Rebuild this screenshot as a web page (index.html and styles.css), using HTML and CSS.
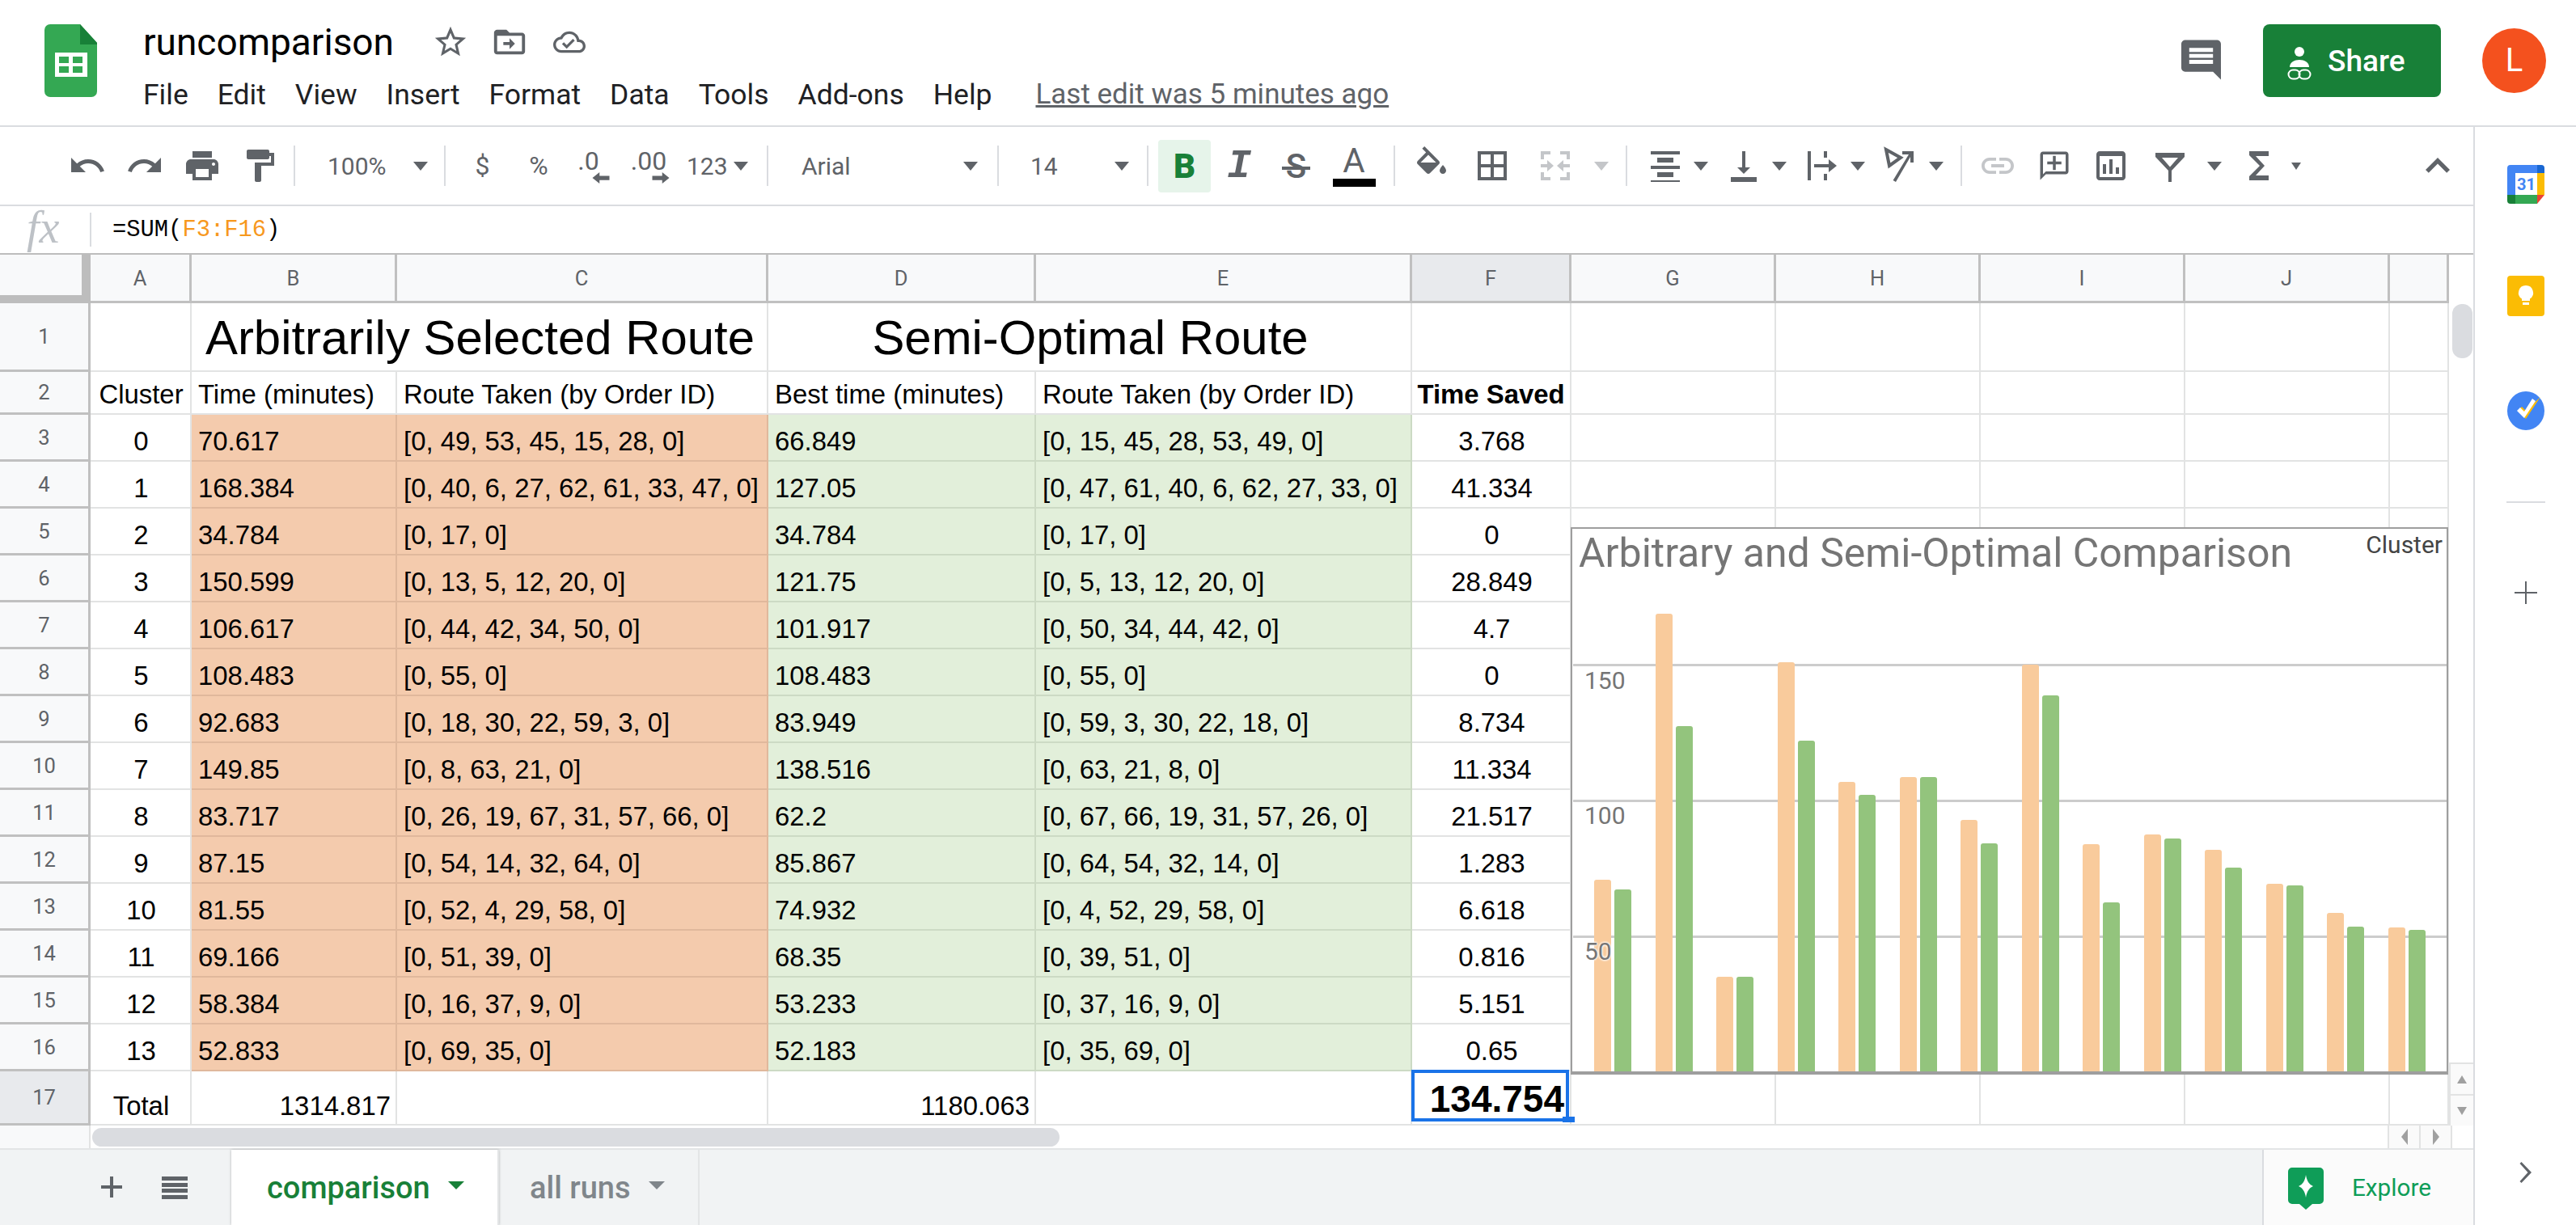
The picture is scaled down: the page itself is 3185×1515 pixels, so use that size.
FILE: index.html
```html
<!DOCTYPE html>
<html lang="en">
<head>
  <meta charset="utf-8" />
  <title>runcomparison - Google Sheets</title>
  <link rel="stylesheet" href="styles.css">
</head>
<body>

  <header class="titlebar">
    <svg class="logo" viewBox="0 0 65 90">
      <path fill="#34a853" d="M7 0h37l21 23v60a7 7 0 0 1-7 7H7a7 7 0 0 1-7-7V7a7 7 0 0 1 7-7z"/>
      <path fill="#188038" d="M44 0l21 23v2H44z"/>
      <path fill="#fff" d="M13 35h40v30H13z"/>
      <path fill="#34a853" d="M18 40h12v8H18zM35 40h12v8H35zM18 52h12v8H18zM35 52h12v8H35z"/>
    </svg>
    <div class="doc-info">
      <div class="doc-title">
        <span class="doc-name">runcomparison</span>
        <svg class="doc-icon wide" viewBox="0 0 24 24"><path d="M22 9.24l-7.19-.62L12 2 9.19 8.63 2 9.24l5.46 4.73L5.82 21 12 17.27 18.18 21l-1.63-7.03L22 9.24zM12 15.4l-3.76 2.27 1-4.28-3.32-2.88 4.38-.38L12 6.1l1.71 4.04 4.38.38-3.32 2.88 1 4.28L12 15.4z"/></svg>
        <svg class="doc-icon wide" viewBox="0 0 24 24"><path d="M20 6h-8l-2-2H4c-1.1 0-2 .9-2 2v12c0 1.1.9 2 2 2h16c1.100 0 2-.9 2-2V8c0-1.100-.9-2-2-2zm0 12H4V8h16v10z"/><path d="M12 9.500l3.500 3.500-3.500 3.500V14H8v-2h4z"/></svg>
        <svg class="doc-icon cloud" viewBox="0 0 24 24"><path d="M19.350 10.040C18.670 6.590 15.640 4 12 4 9.110 4 6.600 5.640 5.350 8.040 2.340 8.360 0 10.910 0 14c0 3.310 2.690 6 6 6h13c2.760 0 5-2.240 5-5 0-2.640-2.050-4.780-4.650-4.960zM19 18H6c-2.210 0-4-1.790-4-4 0-2.050 1.530-3.760 3.560-3.970l1.070-.11.5-.95C8.080 7.140 9.940 6 12 6c2.620 0 4.880 1.860 5.390 4.430l.3 1.500 1.530.11c1.560.1 2.780 1.410 2.780 2.960 0 1.650-1.350 3-3 3zM10 14.200l-2.090-2.090L6.500 13.500 10 17l6.010-6.010-1.410-1.410z"/></svg>
      </div>
      <nav class="menu">
        <span>File</span><span>Edit</span><span>View</span><span>Insert</span><span>Format</span><span>Data</span><span>Tools</span><span>Add-ons</span><span>Help</span>
        <a class="last-edit">Last edit was 5 minutes ago</a>
      </nav>
    </div>
    <div class="title-actions">
      <svg class="comments" viewBox="2 2 20 20"><path d="M21.990 4c0-1.100-.89-2-1.990-2H4c-1.100 0-2 .9-2 2v12c0 1.100.9 2 2 2h14l4 4-.01-18zM18 14H6v-2h12v2zm0-3H6V9h12v2zm0-3H6V6h12v2z"/></svg>
      <button class="share">
        <svg viewBox="0 0 30 42"><circle cx="15" cy="6" r="6"/><path d="M3 25c0-6 6-9 12-9s12 3 12 9z"/><rect x="1.500" y="28.500" width="14" height="11" rx="5.500" fill="none" stroke="#fff" stroke-width="2"/><rect x="14.500" y="28.500" width="14" height="11" rx="5.500" fill="none" stroke="#fff" stroke-width="2"/></svg>
        Share
      </button>
      <div class="avatar">L</div>
    </div>
  </header>

  <div class="workspace">
    <div class="editor">

      <div class="toolbar">
        <div class="tb w71"><svg viewBox="0 0 24 24"><path d="M12.500 8c-2.650 0-5.050.99-6.900 2.600L2 7v9h9l-3.620-3.620c1.390-1.160 3.160-1.880 5.120-1.880 3.540 0 6.550 2.310 7.600 5.500l2.370-.78C21.080 11.030 17.150 8 12.500 8z"/></svg></div>
        <div class="tb w71"><svg viewBox="0 0 24 24"><path d="M18.400 10.600C16.550 8.990 14.150 8 11.500 8c-4.650 0-8.580 3.030-9.960 7.220L3.900 16c1.050-3.190 4.050-5.500 7.600-5.500 1.950 0 3.730.72 5.120 1.880L13 16h9V7l-3.600 3.600z"/></svg></div>
        <div class="tb w71"><svg viewBox="0 0 24 24"><path d="M19 8H5c-1.660 0-3 1.340-3 3v6h4v4h12v-4h4v-6c0-1.660-1.340-3-3-3zm-3 11H8v-5h8v5zm3-7c-.55 0-1-.45-1-1s.45-1 1-1 1 .45 1 1-.45 1-1 1zm-1-9H6v4h12V3z"/></svg></div>
        <div class="tb w71"><svg viewBox="0 0 24 24"><path d="M18 4V3c0-.55-.45-1-1-1H5c-.55 0-1 .45-1 1v4c0 .55.45 1 1 1h12c.55 0 1-.45 1-1V6h1v4H9v11c0 .55.45 1 1 1h2c.55 0 1-.45 1-1v-9h8V4h-3z"/></svg></div>
        <div class="sep sep-7"></div>

        <div class="select zoom-select"><span>100%</span><i class="caret"></i></div>
        <div class="sep"></div>

        <div class="tb txt w71 dollar">$</div>
        <div class="tb txt w68">%</div>
        <div class="tb txt dec w55"><span>.0</span><svg class="dec-arrow" viewBox="0 0 24 16"><path d="M10 0v5h14v6H10v5L0 8z"/></svg></div>
        <div class="tb txt dec w94"><span>.00</span><svg class="dec-arrow" viewBox="0 0 24 16"><path d="M14 0v5H0v6h14v5l10-8z"/></svg></div>
        <div class="num-format"><span>123</span><i class="caret"></i></div>
        <div class="sep"></div>

        <div class="select font-select"><span>Arial</span><i class="caret"></i></div>
        <div class="sep"></div>
        <div class="select size-select"><span>14</span><i class="caret"></i></div>
        <div class="sep"></div>

        <div class="tb bold-btn">B</div>
        <div class="tb w70 italic-btn">I</div>
        <div class="tb w71 strike-btn"><span>S</span></div>
        <div class="tb w72 color-btn"><span>A</span><i class="color-bar"></i></div>
        <div class="sep sep-13"></div>

        <div class="tb w90"><svg viewBox="0 0 24 24"><path d="M16.560 8.940L7.620 0 6.210 1.410l2.380 2.380-5.150 5.150c-.59.59-.59 1.540 0 2.120l5.500 5.500c.29.29.68.44 1.060.44s.77-.15 1.060-.44l5.500-5.500c.59-.58.59-1.530 0-2.120zM5.210 10L10 5.210 14.790 10H5.210zM19 11.500s-2 2.170-2 3.500c0 1.100.9 2 2 2s2-.9 2-2c0-1.330-2-3.500-2-3.500z"/></svg></div>
        <div class="tb w60"><svg viewBox="0 0 24 24"><path d="M3 3v18h18V3H3zm8 16H5v-6h6v6zm0-8H5V5h6v6zm8 8h-6v-6h6v6zm0-8h-6V5h6v6z"/></svg></div>
        <div class="tb w96 off"><svg viewBox="0 0 24 24"><path d="M3 3h6v2H5v3H3zM15 3h6v5h-2V5h-4zM3 16h2v3h4v2H3zM19 16h2v5h-6v-2h4zM3 11h4V8.500L11 12l-4 3.500V13H3zM21 11h-4V8.500L13 12l4 3.500V13h4z"/></svg></div>
        <i class="caret off"></i>
        <div class="sep sep-21"></div>

        <div class="tb w70 ml12"><svg viewBox="0 0 24 24"><path d="M3 3h18v2H3zM7 7h10v3H7zM3 12h18v2H3zM7 16h10v3H7zM3 21h18v1H3z"/></svg></div>
        <i class="caret"></i>
        <div class="tb w70 ml9"><svg viewBox="0 0 24 24"><path d="M16 13h-3V3h-2v10H8l4 4 4-4zM4 19v3h16v-3H4z"/></svg></div>
        <i class="caret"></i>
        <div class="tb w70 ml9"><svg viewBox="0 0 24 24"><path d="M3 3h2v18H3zM13 3h2v4h-2zM13 17h2v4h-2zM7 11h9V8l5 4-5 4v-3H7z"/></svg></div>
        <i class="caret"></i>
        <div class="tb w70 ml9"><svg viewBox="0 0 24 24"><path d="M3 2l9 5-7 5z" fill="none" stroke="#5f6368" stroke-width="2"/><path d="M9 22l-1.700-1L17 5h-4V3h7v7h-2V6.500z"/></svg></div>
        <i class="caret"></i>
        <div class="sep sep-21"></div>

        <div class="tb w70 ml9 off"><svg viewBox="0 0 24 24"><path d="M3.900 12c0-1.710 1.390-3.100 3.100-3.100h4V7H7c-2.760 0-5 2.240-5 5s2.240 5 5 5h4v-1.900H7c-1.710 0-3.100-1.390-3.100-3.100zM8 13h8v-2H8v2zm9-6h-4v1.900h4c1.710 0 3.100 1.390 3.100 3.100s-1.390 3.100-3.100 3.100h-4V17h4c2.760 0 5-2.240 5-5s-2.240-5-5-5z"/></svg></div>
        <div class="tb w70"><svg class="small" viewBox="0 0 24 24"><path d="M20 2H4c-1.100 0-2 .9-2 2v18l4-4h14c1.100 0 2-.9 2-2V4c0-1.100-.9-2-2-2zm0 14H6l-2 2V4h16v12zM13 5h-2v4H7v2h4v4h2v-4h4V9h-4z"/></svg></div>
        <div class="tb w70"><svg viewBox="0 0 24 24"><path d="M19 3H5c-1.100 0-2 .9-2 2v14c0 1.100.9 2 2 2h14c1.100 0 2-.9 2-2V5c0-1.100-.9-2-2-2zm0 16H5V6h14v13z"/><path d="M7 11h2v6H7zM11 8h2v9h-2zM15 13h2v4h-2z"/></svg></div>
        <div class="tb w70 ml3"><svg viewBox="0 0 24 24"><path fill-rule="evenodd" d="M3 4h18v2.500L13 15v7h-2v-7L3 6.500zM7 7l5 5.800L17 7z"/></svg></div>
        <i class="caret ml11"></i>
        <div class="tb w80 ml6"><svg viewBox="0 0 24 24"><path d="M18 3H6v2.500L12.500 12 6 18.500V21h12v-3h-8l5.500-6L10 6h8z"/></svg></div>
        <i class="caret mini"></i>
        <div class="tb collapse"><svg viewBox="0 0 24 24"><path d="M12 7l-7.500 7.500 1.900 1.900L12 10.800l5.600 5.600 1.900-1.900z"/></svg></div>
      </div>

      <div class="formula-bar">
        <span class="fx">fx</span>
        <span class="fx-text">=SUM(<span class="ref">F3:F16</span>)</span>
      </div>

      <div class="grid-wrap">
        <div class="grid-scroll">
          <table class="sheet">
            <colgroup>
              <col class="c-rh"><col class="c-a"><col class="c-b"><col class="c-c"><col class="c-d"><col class="c-e"><col class="c-f"><col class="c-n"><col class="c-n"><col class="c-n"><col class="c-n"><col class="c-k">
            </colgroup>
            <tr class="r-head">
              <th class="corner"></th><th>A</th><th>B</th><th>C</th><th>D</th><th>E</th><th class="on">F</th><th>G</th><th>H</th><th>I</th><th>J</th><th></th>
            </tr>
            <tr class="r-1">
              <th class="rh">1</th><td></td><td class="big" colspan="2">Arbitrarily Selected Route</td><td class="big" colspan="2">Semi-Optimal Route</td><td></td><td></td><td></td><td></td><td></td><td></td>
            </tr>
            <tr class="r-2">
              <th class="rh">2</th><td class="c">Cluster</td><td>Time (minutes)</td><td>Route Taken (by Order ID)</td><td>Best time (minutes)</td><td>Route Taken (by Order ID)</td><td class="c b">Time Saved</td><td></td><td></td><td></td><td></td><td></td>
            </tr>
            <tr class="r-58">
              <th class="rh">3</th><td class="c">0</td><td class="o">70.617</td><td class="o">[0, 49, 53, 45, 15, 28, 0]</td><td class="g">66.849</td><td class="g">[0, 15, 45, 28, 53, 49, 0]</td><td class="c">3.768</td><td></td><td></td><td></td><td></td><td></td>
            </tr>
            <tr class="r-58">
              <th class="rh">4</th><td class="c">1</td><td class="o">168.384</td><td class="o">[0, 40, 6, 27, 62, 61, 33, 47, 0]</td><td class="g">127.05</td><td class="g">[0, 47, 61, 40, 6, 62, 27, 33, 0]</td><td class="c">41.334</td><td></td><td></td><td></td><td></td><td></td>
            </tr>
            <tr class="r-58">
              <th class="rh">5</th><td class="c">2</td><td class="o">34.784</td><td class="o">[0, 17, 0]</td><td class="g">34.784</td><td class="g">[0, 17, 0]</td><td class="c">0</td><td></td><td></td><td></td><td></td><td></td>
            </tr>
            <tr class="r-58">
              <th class="rh">6</th><td class="c">3</td><td class="o">150.599</td><td class="o">[0, 13, 5, 12, 20, 0]</td><td class="g">121.75</td><td class="g">[0, 5, 13, 12, 20, 0]</td><td class="c">28.849</td><td></td><td></td><td></td><td></td><td></td>
            </tr>
            <tr class="r-58">
              <th class="rh">7</th><td class="c">4</td><td class="o">106.617</td><td class="o">[0, 44, 42, 34, 50, 0]</td><td class="g">101.917</td><td class="g">[0, 50, 34, 44, 42, 0]</td><td class="c">4.7</td><td></td><td></td><td></td><td></td><td></td>
            </tr>
            <tr class="r-58">
              <th class="rh">8</th><td class="c">5</td><td class="o">108.483</td><td class="o">[0, 55, 0]</td><td class="g">108.483</td><td class="g">[0, 55, 0]</td><td class="c">0</td><td></td><td></td><td></td><td></td><td></td>
            </tr>
            <tr class="r-58">
              <th class="rh">9</th><td class="c">6</td><td class="o">92.683</td><td class="o">[0, 18, 30, 22, 59, 3, 0]</td><td class="g">83.949</td><td class="g">[0, 59, 3, 30, 22, 18, 0]</td><td class="c">8.734</td><td></td><td></td><td></td><td></td><td></td>
            </tr>
            <tr class="r-58">
              <th class="rh">10</th><td class="c">7</td><td class="o">149.85</td><td class="o">[0, 8, 63, 21, 0]</td><td class="g">138.516</td><td class="g">[0, 63, 21, 8, 0]</td><td class="c">11.334</td><td></td><td></td><td></td><td></td><td></td>
            </tr>
            <tr class="r-58">
              <th class="rh">11</th><td class="c">8</td><td class="o">83.717</td><td class="o">[0, 26, 19, 67, 31, 57, 66, 0]</td><td class="g">62.2</td><td class="g">[0, 67, 66, 19, 31, 57, 26, 0]</td><td class="c">21.517</td><td></td><td></td><td></td><td></td><td></td>
            </tr>
            <tr class="r-58">
              <th class="rh">12</th><td class="c">9</td><td class="o">87.15</td><td class="o">[0, 54, 14, 32, 64, 0]</td><td class="g">85.867</td><td class="g">[0, 64, 54, 32, 14, 0]</td><td class="c">1.283</td><td></td><td></td><td></td><td></td><td></td>
            </tr>
            <tr class="r-58">
              <th class="rh">13</th><td class="c">10</td><td class="o">81.55</td><td class="o">[0, 52, 4, 29, 58, 0]</td><td class="g">74.932</td><td class="g">[0, 4, 52, 29, 58, 0]</td><td class="c">6.618</td><td></td><td></td><td></td><td></td><td></td>
            </tr>
            <tr class="r-58">
              <th class="rh">14</th><td class="c">11</td><td class="o">69.166</td><td class="o">[0, 51, 39, 0]</td><td class="g">68.35</td><td class="g">[0, 39, 51, 0]</td><td class="c">0.816</td><td></td><td></td><td></td><td></td><td></td>
            </tr>
            <tr class="r-58">
              <th class="rh">15</th><td class="c">12</td><td class="o">58.384</td><td class="o">[0, 16, 37, 9, 0]</td><td class="g">53.233</td><td class="g">[0, 37, 16, 9, 0]</td><td class="c">5.151</td><td></td><td></td><td></td><td></td><td></td>
            </tr>
            <tr class="r-58">
              <th class="rh">16</th><td class="c">13</td><td class="o">52.833</td><td class="o">[0, 69, 35, 0]</td><td class="g">52.183</td><td class="g">[0, 35, 69, 0]</td><td class="c">0.65</td><td></td><td></td><td></td><td></td><td></td>
            </tr>
            <tr class="r-17">
              <th class="rh on">17</th><td class="c">Total</td><td class="n">1314.817</td><td></td><td class="n">1180.063</td><td></td><td class="n total-cell"><span class="sel-handle"></span>134.754</td><td></td><td></td><td></td><td></td><td></td>
            </tr>
          </table>

          <div class="chart">
            <div class="chart-title">Arbitrary and Semi-Optimal Comparison</div>
            <div class="chart-legend">Cluster</div>
            <div class="hline l150"></div>
            <div class="hline l100"></div>
            <div class="hline l50"></div>
            <div class="bars">
              <div class="bar-group"><i class="bar a" style="height:237px"></i><i class="bar b" style="height:225px"></i></div>
              <div class="bar-group"><i class="bar a" style="height:566px"></i><i class="bar b" style="height:427px"></i></div>
              <div class="bar-group"><i class="bar a" style="height:117px"></i><i class="bar b" style="height:117px"></i></div>
              <div class="bar-group"><i class="bar a" style="height:506px"></i><i class="bar b" style="height:409px"></i></div>
              <div class="bar-group"><i class="bar a" style="height:358px"></i><i class="bar b" style="height:342px"></i></div>
              <div class="bar-group"><i class="bar a" style="height:364px"></i><i class="bar b" style="height:364px"></i></div>
              <div class="bar-group"><i class="bar a" style="height:311px"></i><i class="bar b" style="height:282px"></i></div>
              <div class="bar-group"><i class="bar a" style="height:503px"></i><i class="bar b" style="height:465px"></i></div>
              <div class="bar-group"><i class="bar a" style="height:281px"></i><i class="bar b" style="height:209px"></i></div>
              <div class="bar-group"><i class="bar a" style="height:293px"></i><i class="bar b" style="height:288px"></i></div>
              <div class="bar-group"><i class="bar a" style="height:274px"></i><i class="bar b" style="height:252px"></i></div>
              <div class="bar-group"><i class="bar a" style="height:232px"></i><i class="bar b" style="height:230px"></i></div>
              <div class="bar-group"><i class="bar a" style="height:196px"></i><i class="bar b" style="height:179px"></i></div>
              <div class="bar-group"><i class="bar a" style="height:178px"></i><i class="bar b" style="height:175px"></i></div>
            </div>
            <span class="axis a150">150</span>
            <span class="axis a100">100</span>
            <span class="axis a50">50</span>
          </div>
        </div>

        <div class="vscroll">
          <div class="vtrack"><div class="vthumb"></div></div>
          <div class="vbtn"><i class="tri up"></i></div>
          <div class="vbtn"><i class="tri down"></i></div>
        </div>
      </div>

      <div class="hscroll">
        <div class="hs-stub"></div>
        <div class="hs-track"><div class="hs-thumb"></div></div>
        <div class="hs-btn"><i class="tri left"></i></div>
        <div class="hs-btn"><i class="tri right"></i></div>
        <div class="hs-corner"></div>
      </div>

      <div class="tabbar">
        <svg class="tab-add" viewBox="0 0 26 26"><path d="M11 0h4v11h11v4H15v11h-4V15H0v-4h11z"/></svg>
        <svg class="tab-list" viewBox="0 0 32 28"><path d="M0 0h32v5H0zM0 8h32v5H0zM0 15h32v5H0zM0 23h32v5H0z"/></svg>
        <div class="tab active"><span>comparison</span><i class="tri-down"></i></div>
        <div class="tab"><span>all runs</span><i class="tri-down"></i></div>
        <div class="explore">
          <svg viewBox="0 0 44 52"><path fill="#0f9d58" d="M5 0h34a5 5 0 0 1 5 5v35a5 5 0 0 1-5 5h-9l-8 7-8-7H5a5 5 0 0 1-5-5V5a5 5 0 0 1 5-5z"/><path fill="#fff" d="M22 9c1 7 4 12 9 14-5 2-8 7-9 14-1-7-4-12-9-14 5-2 8-7 9-14z"/></svg>
          <span>Explore</span>
        </div>
      </div>
    </div>

    <aside class="side-panel">
      <svg class="addon cal" viewBox="0 0 46 48">
        <path fill="#4285f4" d="M4 0h33v10H10v27H0V4a4 4 0 0 1 4-4z"/>
        <path fill="#1967d2" d="M37 0h5a4 4 0 0 1 4 4v6h-9z"/>
        <path fill="#fbbc04" d="M37 10h9v27h-9z"/>
        <path fill="#34a853" d="M10 37h27v11H10z"/>
        <path fill="#188038" d="M0 37h10v11H4a4 4 0 0 1-4-4z"/>
        <path fill="#ea4335" d="M37 37h9L37 48z"/>
        <path fill="#fff" d="M10 10h27v27H10z"/>
        <text x="23.500" y="31" text-anchor="middle" class="cal-num">31</text>
      </svg>
      <svg class="addon keep" viewBox="0 0 46 50">
        <path fill="#fbbc04" d="M4 0h38a4 4 0 0 1 4 4v42a4 4 0 0 1-4 4H4a4 4 0 0 1-4-4V4a4 4 0 0 1 4-4z"/>
        <path fill="#fff" d="M23 12a9 9 0 0 1 5 16.500V31H18v-2.500A9 9 0 0 1 23 12zM19 33h8v3h-8z"/>
      </svg>
      <svg class="addon tasks" viewBox="0 0 48 50">
        <ellipse cx="24" cy="25" rx="23" ry="24" fill="#4285f4"/>
        <path fill="#fbbc04" d="M42 8L24 35l-10-10 5-5 5 5z"/>
        <path fill="#fff" d="M36 13L22 34l-9-9 4-4 5 5 10-16z"/>
      </svg>
      <div class="side-sep"></div>
      <svg class="side-plus" viewBox="0 0 28 28"><path d="M13 0h2v13h13v2H15v13h-2V15H0v-2h13z"/></svg>
      <svg class="side-chevron" viewBox="0 0 16 26"><path d="M2.500 0L15 13 2.500 26 .500 24 10.500 13 .500 2z"/></svg>
    </aside>
  </div>

</body>
</html>
```

FILE: styles.css
```css
* {
  box-sizing: border-box;
}

body {
  margin: 0;
  width: 3185px;
  height: 1515px;
  overflow: hidden;
  background: #fff;
  font-family: "Roboto", sans-serif;
  color: #000;
}

/* title bar */
.titlebar {
  display: flex;
  height: 157px;
  padding: 30px 0 0 55px;
  border-bottom: 2px solid #dadce0;
}

.logo {
  width: 65px;
  height: 90px;
  margin-right: 57px;
  flex: none;
}

.doc-info {
  flex: 1;
}

.doc-title {
  display: flex;
  align-items: center;
  height: 44px;
  gap: 27px;
  color: #5f6368;
}

.doc-name {
  font-size: 46px;
  color: #000;
  margin-right: 20px;
}

.doc-icon {
  width: 40px;
  height: 40px;
  fill: #5f6368;
}

.doc-icon.wide {
  width: 46px;
  height: 46px;
}

.doc-icon.cloud {
  margin-left: 4px;
}

.menu {
  display: flex;
  gap: 36px;
  margin-top: 23px;
  font-size: 35.500px;
  line-height: 40px;
  color: #202124;
}

.last-edit {
  margin-left: 18px;
  font-size: 35px;
  color: #5f6368;
  text-decoration: underline;
}

.title-actions {
  display: flex;
  align-items: flex-start;
  padding-right: 37px;
}

.comments {
  width: 49px;
  height: 50px;
  margin: 19px 52px 0 0;
  fill: #5f6368;
}

.share {
  display: flex;
  align-items: center;
  gap: 20px;
  width: 220px;
  height: 90px;
  padding: 0 0 0 30px;
  border: none;
  border-radius: 8px;
  background: #188038;
  color: #fff;
  font: 500 37px "Roboto", sans-serif;
}

.share svg {
  width: 30px;
  height: 42px;
  fill: #fff;
  margin-top: 8px;
}

.avatar {
  width: 79px;
  height: 80px;
  margin: 5px 0 0 51px;
  border-radius: 50%;
  background: #f4511e;
  color: #fff;
  font-size: 40px;
  line-height: 80px;
  text-align: center;
}

/* main area */
.workspace {
  display: flex;
  height: 1358px;
}

.editor {
  width: 3058px;
  flex: none;
}

/* toolbar */
.toolbar {
  display: flex;
  align-items: center;
  height: 98px;
  padding-left: 72px;
  border-bottom: 2px solid #dadce0;
  font-size: 30px;
  color: #5f6368;
}

.tb {
  display: flex;
  align-items: center;
  justify-content: center;
  flex: none;
  height: 65px;
}

.tb svg {
  width: 48px;
  height: 48px;
  fill: #5f6368;
}

.tb svg.small {
  width: 42px;
  height: 42px;
}

.tb.off svg {
  fill: #c4c6c9;
}

.tb.txt {
  font-size: 32px;
}

.w55 { width: 55px; }
.w60 { width: 60px; }
.w68 { width: 68px; }
.w70 { width: 70px; }
.w71 { width: 71px; }
.w72 { width: 72px; }
.w80 { width: 80px; }
.w90 { width: 90px; }
.w94 { width: 94px; }
.w96 { width: 96px; }
.ml3 { margin-left: 3px; }
.ml9 { margin-left: 9px; }
.ml6 { margin-left: 6px; }
.ml11 { margin-left: 11px; }
.ml12 { margin-left: 12px; }

.sep {
  flex: none;
  width: 2px;
  height: 50px;
  background: #dadce0;
}

.sep-7 { margin-left: 7px; }
.sep-13 { margin-left: 13px; }
.sep-21 { margin-left: 21px; }

.caret {
  flex: none;
  width: 0;
  height: 0;
  border-left: 9.500px solid transparent;
  border-right: 9.500px solid transparent;
  border-top: 11px solid #5f6368;
}

.caret.off {
  border-top-color: #c4c6c9;
}

.caret.mini {
  border-left-width: 6px;
  border-right-width: 6px;
  border-top-width: 9px;
}

.select {
  display: flex;
  align-items: center;
  justify-content: space-between;
  flex: none;
}

.zoom-select { width: 184px; padding: 0 20px 0 40px; }
.font-select { width: 283px; padding: 0 24px 0 41px; }
.size-select { width: 183px; padding: 0 22px 0 39px; }

.dollar {
  margin-left: 10px;
}

.dec {
  flex-direction: column;
  justify-content: flex-start;
  padding-top: 12px;
  line-height: 29px;
}

.tb svg.dec-arrow {
  width: 22px;
  height: 14px;
  margin-top: -1px;
  transform: translateX(15px);
}

.num-format {
  display: flex;
  align-items: center;
  gap: 7px;
  width: 99px;
  flex: none;
}

.bold-btn {
  width: 65px;
  margin-left: 12px;
  border-radius: 4px;
  background: #e6f4ea;
  color: #188038;
  font-size: 42px;
  font-weight: 900;
}

.italic-btn {
  font: italic 700 50px "Liberation Mono", monospace;
}

.strike-btn {
  position: relative;
  font-size: 42px;
  font-weight: 500;
}

/* the bar runs past the letter on both sides */
.strike-btn::after {
  content: "";
  position: absolute;
  left: 18px;
  right: 18px;
  top: 33px;
  height: 4px;
  background: #5f6368;
}

.color-btn {
  flex-direction: column;
  font-size: 42px;
  line-height: 38px;
}

.color-bar {
  display: block;
  width: 53px;
  height: 10px;
  margin-top: 3px;
  background: #000;
}

.collapse {
  width: 60px;
  margin-left: auto;
  margin-right: 14px;
}

/* formula bar */
.formula-bar {
  display: flex;
  align-items: center;
  height: 60px;
  padding-left: 33px;
  border-bottom: 2px solid #bdbdbd;
}

.fx {
  width: 80px;
  height: 42px;
  margin-right: 26px;
  border-right: 2px solid #dadce0;
  font: italic 56px/36px "Liberation Serif", serif;
  color: #bdc1c6;
}

.fx-text {
  font: 28.800px "Liberation Mono", monospace;
}

.ref {
  color: #f7981d;
}

/* grid */
.grid-wrap {
  display: flex;
  height: 1077px;
}

.grid-scroll {
  position: relative;
  width: 3028px;
  flex: none;
}

.sheet {
  width: 3028px;
  border-collapse: separate;
  border-spacing: 0;
  table-layout: fixed;
  font: 32.900px "Liberation Sans", sans-serif;
}

.c-rh { width: 112px; }
.c-a { width: 125px; }
.c-b { width: 254px; }
.c-c { width: 459px; }
.c-d { width: 331px; }
.c-e { width: 465px; }
.c-f { width: 197px; }
.c-n { width: 253px; }
.c-k { width: 73px; }

.r-head th { height: 60px; }
.r-1 th, .r-1 td { height: 85px; }
.r-2 th, .r-2 td { height: 53px; }
.r-58 th, .r-58 td { height: 58px; }
.r-17 th, .r-17 td { height: 67px; }

.sheet th {
  padding: 0;
  background: #f8f9fa;
  border-right: 3px solid #c0c0c0;
  border-bottom: 3px solid #c0c0c0;
  font: 400 25.500px "Roboto", sans-serif;
  color: #5f6368;
}

.sheet th.on {
  background: #e8eaed;
}

.sheet th.corner {
  border-right: 11px solid #bdbdbd;
  border-bottom: 10px solid #bdbdbd;
}

.sheet td {
  padding: 0 6px 4px 8px;
  vertical-align: bottom;
  white-space: nowrap;
  overflow: hidden;
  border-right: 2px solid #e2e3e3;
  border-bottom: 2px solid #e2e3e3;
}

.sheet .r-17 td {
  padding-bottom: 3px;
}

.sheet td.big {
  padding-bottom: 6px;
  font-size: 59.900px;
  text-align: center;
}

.sheet td.c {
  text-align: center;
}

.sheet td.b {
  font-weight: 700;
  padding-left: 0;
  padding-right: 0;
}

.sheet td.n {
  text-align: right;
}

.sheet td.o {
  background: #f4cbad;
  border-color: #e0b89c;
}

.sheet td.g {
  background: #e2efda;
  border-color: #ccdac4;
}

.sheet .r-17 td.total-cell {
  position: relative;
  overflow: visible;
  padding-right: 7px;
  padding-bottom: 3px;
  font-size: 46px;
  font-weight: 700;
  line-height: 56px;
}

/* selection box, sits on the grid lines */
.total-cell::before {
  content: "";
  position: absolute;
  left: -1px;
  right: 1px;
  top: -2px;
  bottom: 3px;
  border: 4px solid #1a73e8;
}

.sel-handle {
  position: absolute;
  right: -6px;
  bottom: 2px;
  width: 15px;
  height: 7px;
  background: #1a73e8;
}

/* chart sits over the cells */
.chart {
  position: absolute;
  left: 1942px;
  top: 337px;
  width: 1085px;
  height: 677px;
  background: #fff;
  border: 2px solid #9e9e9e;
  border-bottom-width: 4px;
}

.chart-title {
  position: absolute;
  left: 8px;
  top: 1px;
  font-size: 50px;
  color: #757575;
  white-space: nowrap;
}

.chart-legend {
  position: absolute;
  right: 5px;
  top: 2px;
  font-size: 30px;
  color: #444;
}

.hline {
  position: absolute;
  left: 1px;
  right: 0;
  height: 3px;
  background: #ccc;
}

.l150 { top: 167px; }
.l100 { top: 335px; }
.l50 { top: 503px; }

.bars {
  position: absolute;
  left: 27px;
  bottom: 0;
  display: flex;
  align-items: flex-end;
}

.bar-group {
  display: flex;
  align-items: flex-end;
  gap: 4px;
  width: 75.500px;
}

.bar {
  display: block;
  width: 21px;
  border-radius: 3px 3px 0 0;
}

.bar.a { background: #f9cb9c; }
.bar.b { background: #93c47d; }

.axis {
  position: absolute;
  font-size: 30px;
  line-height: 36px;
  color: #757575;
  text-shadow: 0 0 3px #fff, 0 0 3px #fff, 0 0 3px #fff;
}

.a150 { left: 15px; top: 170px; }
.a100 { left: 15px; top: 337px; }
.a50 { left: 15px; top: 505px; }

/* scrollbars */
.vscroll {
  display: flex;
  flex-direction: column;
  width: 30px;
  flex: none;
}

.vtrack {
  height: 999px;
  padding: 61px 1px 0 4px;
}

.vthumb {
  height: 67px;
  border-radius: 12px;
  background: #dadce0;
}

.vbtn {
  display: flex;
  align-items: center;
  justify-content: center;
  height: 39px;
  background: #fafafa;
  border-top: 2px solid #e2e3e3;
  border-left: 2px solid #e2e3e3;
}

.tri {
  width: 0;
  height: 0;
  border: 6px solid transparent;
}

.tri.up { border-bottom: 10px solid #a0a0a0; border-top: 0; }
.tri.down { border-top: 10px solid #a0a0a0; border-bottom: 0; }
.tri.left { border-right: 8px solid #a0a0a0; border-left: 0; border-top-width: 10px; border-bottom-width: 10px; }
.tri.right { border-left: 8px solid #a0a0a0; border-right: 0; border-top-width: 10px; border-bottom-width: 10px; }

.hscroll {
  display: flex;
  height: 28px;
}

.hs-stub {
  width: 112px;
  background: #f8f9fa;
  border-right: 2px solid #e2e3e3;
  flex: none;
}

.hs-track {
  flex: 1;
  padding: 3px 0 2px 2px;
}

.hs-thumb {
  width: 1196px;
  height: 23px;
  border-radius: 12px;
  background: #dadce0;
}

.hs-btn {
  display: flex;
  align-items: center;
  justify-content: center;
  width: 39px;
  border-left: 2px solid #e2e3e3;
  background: #fafafa;
}

.hs-corner {
  width: 28px;
  border-left: 2px solid #e2e3e3;
}

/* sheet tabs */
.tabbar {
  display: flex;
  height: 95px;
  background: #f1f3f4;
  border-top: 2px solid #e3e5e6;
}

.tab-add {
  width: 26px;
  height: 26px;
  margin: 33px 49px 0 125px;
  fill: #5f6368;
}

.tab-list {
  width: 32px;
  height: 28px;
  margin: 33px 54px 0 0;
  fill: #5f6368;
}

.tab {
  display: flex;
  align-items: center;
  gap: 22px;
  padding: 0 41px 0 38px;
  border-right: 2px solid #e3e5e6;
  font-size: 38px;
  font-weight: 500;
  color: #80868b;
}

.tab.active {
  width: 331px;
  padding-left: 44px;
  background: #fff;
  color: #188038;
  box-shadow: 0 0 3px rgba(60, 64, 67, 0.35);
}

.tri-down {
  width: 0;
  height: 0;
  margin-top: -6px;
  border-left: 10px solid transparent;
  border-right: 10px solid transparent;
  border-top: 10px solid currentColor;
}

.explore {
  display: flex;
  align-items: center;
  gap: 35px;
  width: 261px;
  margin-left: auto;
  padding-left: 30px;
  background: #fbfbfb;
  border-left: 2px solid #dadce0;
  font-size: 29.700px;
  color: #0f9d58;
}

.explore svg {
  width: 44px;
  height: 52px;
  margin-top: 2px;
}

/* right hand panel */
.side-panel {
  display: flex;
  flex-direction: column;
  align-items: center;
  width: 127px;
  padding: 47px 0 52px;
  border-left: 2px solid #dadce0;
}

.addon {
  flex: none;
}

.cal { width: 46px; height: 48px; }
.keep { width: 46px; height: 50px; margin-top: 89px; }
.tasks { width: 48px; height: 50px; margin-top: 92px; }

.cal-num {
  font: 700 20px "Roboto", sans-serif;
  fill: #4285f4;
}

.side-sep {
  width: 48px;
  height: 2px;
  margin-top: 87px;
  background: #dadce0;
}

.side-plus {
  width: 28px;
  height: 28px;
  margin-top: 97px;
  fill: #5f6368;
}

.side-chevron {
  width: 16px;
  height: 26px;
  margin-top: auto;
  fill: #5f6368;
}
```
